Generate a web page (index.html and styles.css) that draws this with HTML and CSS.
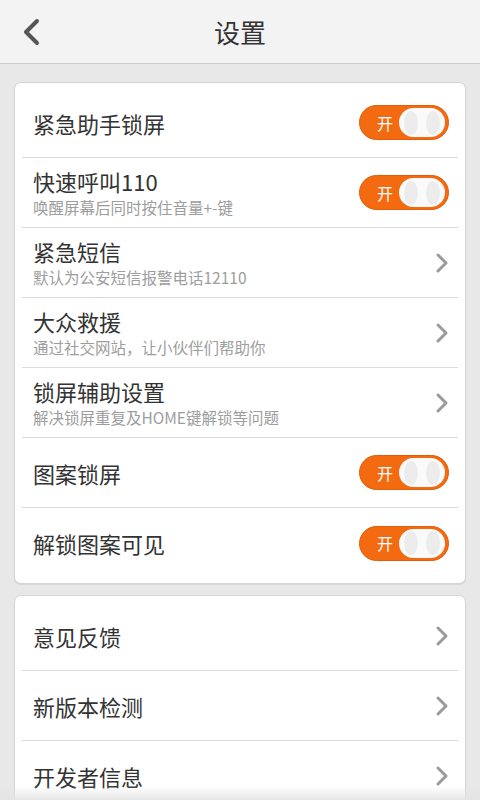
FILE: index.html
```html
<!DOCTYPE html>
<html lang="zh-CN">
<head>
<meta charset="utf-8">
<title>设置</title>
<link rel="stylesheet" href="styles.css">
</head>
<body>
<div class="screen">
  <header class="topbar">
    <span class="back">
      <svg width="20" height="28" viewBox="0 0 20 28"><polyline points="16,3 5,14 16,25" fill="none" stroke="#555" stroke-width="4" stroke-linecap="round" stroke-linejoin="round"/></svg>
    </span>
    <h1 class="title">设置</h1>
  </header>
  <main class="content">
    <section class="card">
      <div class="row">
        <div class="text"><div class="name">紧急助手锁屏</div></div>
        <div class="toggle"><span class="on">开</span><span class="knob"><i></i><i></i></span></div>
      </div>
      <div class="row">
        <div class="text"><div class="name">快速呼叫110</div><div class="sub">唤醒屏幕后同时按住音量+-键</div></div>
        <div class="toggle"><span class="on">开</span><span class="knob"><i></i><i></i></span></div>
      </div>
      <div class="row">
        <div class="text"><div class="name">紧急短信</div><div class="sub">默认为公安短信报警电话12110</div></div>
        <svg class="chev" width="14" height="22" viewBox="0 0 14 22"><polyline points="3,3 11,11 3,19" fill="none" stroke="#9a9a9a" stroke-width="3" stroke-linecap="round" stroke-linejoin="round"/></svg>
      </div>
      <div class="row">
        <div class="text"><div class="name">大众救援</div><div class="sub">通过社交网站，让小伙伴们帮助你</div></div>
        <svg class="chev" width="14" height="22" viewBox="0 0 14 22"><polyline points="3,3 11,11 3,19" fill="none" stroke="#9a9a9a" stroke-width="3" stroke-linecap="round" stroke-linejoin="round"/></svg>
      </div>
      <div class="row">
        <div class="text"><div class="name">锁屏辅助设置</div><div class="sub">解决锁屏重复及HOME键解锁等问题</div></div>
        <svg class="chev" width="14" height="22" viewBox="0 0 14 22"><polyline points="3,3 11,11 3,19" fill="none" stroke="#9a9a9a" stroke-width="3" stroke-linecap="round" stroke-linejoin="round"/></svg>
      </div>
      <div class="row">
        <div class="text"><div class="name">图案锁屏</div></div>
        <div class="toggle"><span class="on">开</span><span class="knob"><i></i><i></i></span></div>
      </div>
      <div class="row">
        <div class="text"><div class="name">解锁图案可见</div></div>
        <div class="toggle"><span class="on">开</span><span class="knob"><i></i><i></i></span></div>
      </div>
    </section>
    <section class="card">
      <div class="row">
        <div class="text"><div class="name">意见反馈</div></div>
        <svg class="chev" width="14" height="22" viewBox="0 0 14 22"><polyline points="3,3 11,11 3,19" fill="none" stroke="#9a9a9a" stroke-width="3" stroke-linecap="round" stroke-linejoin="round"/></svg>
      </div>
      <div class="row">
        <div class="text"><div class="name">新版本检测</div></div>
        <svg class="chev" width="14" height="22" viewBox="0 0 14 22"><polyline points="3,3 11,11 3,19" fill="none" stroke="#9a9a9a" stroke-width="3" stroke-linecap="round" stroke-linejoin="round"/></svg>
      </div>
      <div class="row">
        <div class="text"><div class="name">开发者信息</div></div>
        <svg class="chev" width="14" height="22" viewBox="0 0 14 22"><polyline points="3,3 11,11 3,19" fill="none" stroke="#9a9a9a" stroke-width="3" stroke-linecap="round" stroke-linejoin="round"/></svg>
      </div>
    </section>
  </main>
  <div class="fade"></div>
</div>
</body>
</html>
```

FILE: styles.css
```css
html, body {
  margin: 0;
  padding: 0;
}
body {
  background: #e8e8e8;
  font-family: "Noto Sans CJK SC", "Noto Sans", sans-serif;
  color: #333;
}
.screen {
  width: 480px;
  height: 800px;
  overflow: hidden;
  position: relative;
  background: #e8e8e8;
}
.topbar {
  height: 64px;
  box-sizing: border-box;
  background: #f3f3f3;
  border-bottom: 1px solid #cdcdcd;
  display: flex;
  align-items: center;
  justify-content: center;
  position: relative;
}
.back {
  position: absolute;
  left: 21px;
  top: 18px;
  display: block;
}
.back svg { display: block; }
.title {
  margin: 0;
  font-size: 26px;
  font-weight: normal;
  color: #333;
  line-height: 1;
}
.content {
  padding: 18px 14px 0;
  display: flex;
  flex-direction: column;
  gap: 11px;
}
.card {
  background: #fff;
  border: 1px solid #d4d4d4;
  border-radius: 7px;
  box-shadow: 0 1px 1px rgba(0,0,0,0.08);
  padding: 5px 0;
}
.row {
  height: 70px;
  margin: 0 7px;
  padding: 0 9px 0 11px;
  display: flex;
  align-items: center;
  justify-content: space-between;
  border-bottom: 1px solid #dcdcdc;
  box-sizing: border-box;
}
.row:last-child {
  border-bottom: none;
}
.text {
  display: flex;
  flex-direction: column;
}
.name {
  font-size: 22px;
  line-height: 26px;
  color: #333;
}
.sub {
  font-size: 15.5px;
  line-height: 20px;
  color: #9d9d9d;
  margin-top: 3px;
}
.chev {
  display: block;
}
.toggle {
  width: 90px;
  height: 35px;
  box-sizing: border-box;
  border-radius: 18px;
  background: #f36a10;
  border: 1.5px solid #e25d08;
  display: flex;
  align-items: center;
  justify-content: space-between;
  padding: 0 3px 0 17px;
}
.on {
  color: #fff;
  font-size: 16px;
  line-height: 1;
}
.knob {
  width: 46px;
  height: 29px;
  border-radius: 15px;
  background: #fafafa;
  display: flex;
  align-items: center;
  justify-content: space-between;
  padding: 0 5px;
  box-sizing: border-box;
}
.knob i {
  display: block;
  width: 14px;
  height: 24px;
  border-radius: 50%;
  background: #ececec;
}
.fade {
  position: absolute;
  left: 0;
  right: 0;
  bottom: 0;
  height: 14px;
  background: linear-gradient(to bottom, rgba(232,232,232,0), rgba(228,228,228,0.9));
}
```
